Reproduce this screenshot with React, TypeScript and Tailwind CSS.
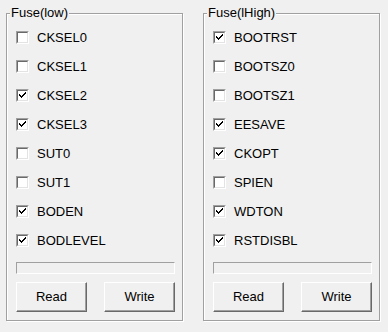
type Fuse = { name: string; on: boolean };

const lowFuses: Fuse[] = [
  { name: 'CKSEL0', on: false },
  { name: 'CKSEL1', on: false },
  { name: 'CKSEL2', on: true },
  { name: 'CKSEL3', on: true },
  { name: 'SUT0', on: false },
  { name: 'SUT1', on: false },
  { name: 'BODEN', on: true },
  { name: 'BODLEVEL', on: true },
];

const highFuses: Fuse[] = [
  { name: 'BOOTRST', on: true },
  { name: 'BOOTSZ0', on: false },
  { name: 'BOOTSZ1', on: false },
  { name: 'EESAVE', on: true },
  { name: 'CKOPT', on: true },
  { name: 'SPIEN', on: false },
  { name: 'WDTON', on: true },
  { name: 'RSTDISBL', on: true },
];

function CheckBox({ on }: { on: boolean }) {
  return (
    <div className="w-[13px] h-[13px] border border-t-[#a0a0a0] border-l-[#a0a0a0] border-b-white border-r-white">
      <div className="w-full h-full bg-white border border-t-[#696969] border-l-[#696969] border-b-[#e3e3e3] border-r-[#e3e3e3] flex items-center justify-center">
        {on && (
          <svg width="7" height="7" viewBox="0 0 7 7" className="block">
            <path d="M0 2h1v1h1v1h1V3h1V2h1V1h1V0h1v2H6v1H5v1H4v1H3v1H2V5H1V4H0z" fill="#000" />
          </svg>
        )}
      </div>
    </div>
  );
}

function Button({ label }: { label: string }) {
  return (
    <div className="w-[71px] h-[30px] border border-t-white border-l-white border-b-[#696969] border-r-[#696969] shadow-[inset_-1px_-1px_0_#a0a0a0] bg-[#f0f0f0] flex items-center justify-center text-[13px] text-black">
      {label}
    </div>
  );
}

function FuseGroup({ title, fuses }: { title: string; fuses: Fuse[] }) {
  return (
    <div className="relative w-[177px] h-[308px] border border-[#a0a0a0] shadow-[inset_1px_1px_0_white,1px_1px_0_white] pt-[9px] pl-[9px] pr-[7px] pb-[8px] flex flex-col">
      <span className="absolute left-[3px] top-[-9px] bg-[#f0f0f0] px-px text-[13px] leading-[16px] text-black">{title}</span>
      <div className="flex flex-col">
        {fuses.map((f) => (
          <div key={f.name} className="h-[29px] flex items-center gap-2">
            <CheckBox on={f.on} />
            <span className="text-[13px] text-black leading-none">{f.name}</span>
          </div>
        ))}
      </div>
      <div className="mt-[7px] h-[12px] border border-t-[#a0a0a0] border-l-[#a0a0a0] border-b-white border-r-white" />
      <div className="mt-[8px] flex justify-between">
        <Button label="Read" />
        <Button label="Write" />
      </div>
    </div>
  );
}

export default function App() {
  return (
    <div className="w-[388px] h-[332px] bg-[#f0f0f0] pt-[13px] pl-[6px] flex gap-[20px] font-['Liberation_Sans',Arial,sans-serif]">
      <FuseGroup title="Fuse(low)" fuses={lowFuses} />
      <FuseGroup title="Fuse(lHigh)" fuses={highFuses} />
    </div>
  );
}
